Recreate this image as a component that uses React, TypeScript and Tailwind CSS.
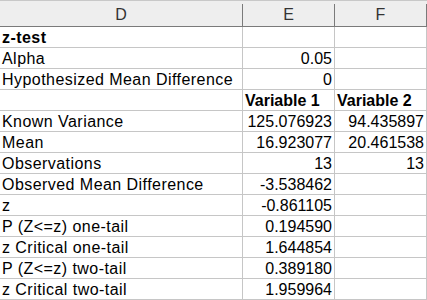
const rows: { label: string; e?: string; f?: string; bold?: boolean; head?: boolean }[] = [
  { label: 'z-test', bold: true },
  { label: 'Alpha', e: '0.05' },
  { label: 'Hypothesized Mean Difference', e: '0' },
  { label: '', e: 'Variable 1', f: 'Variable 2', head: true },
  { label: 'Known Variance', e: '125.076923', f: '94.435897' },
  { label: 'Mean', e: '16.923077', f: '20.461538' },
  { label: 'Observations', e: '13', f: '13' },
  { label: 'Observed Mean Difference', e: '-3.538462' },
  { label: 'z', e: '-0.861105' },
  { label: 'P (Z<=z) one-tail', e: '0.194590' },
  { label: 'z Critical one-tail', e: '1.644854' },
  { label: 'P (Z<=z) two-tail', e: '0.389180' },
  { label: 'z Critical two-tail', e: '1.959964' },
]

function HeaderCell({ name, width }: { name: string; width: string }) {
  return (
    <div className={`flex h-full ${width}`}>
      <div className="flex flex-1 items-center justify-center pt-[3px] text-[#333]">{name}</div>
      <div className="w-px self-end h-[22px] bg-[#7a7a7a]" />
    </div>
  )
}

export default function App() {
  return (
    <div className="w-[427px] h-[300px] overflow-hidden bg-white text-[16px] leading-[20px] text-black" style={{ fontFamily: '"Liberation Sans", Arial, sans-serif' }}>
      <div className="flex h-[27px] border-t border-[#c8c8c8] border-b border-b-[#7a7a7a] bg-[#eeeeee]">
        <HeaderCell name="D" width="w-[243px]" />
        <HeaderCell name="E" width="w-[92px]" />
        <HeaderCell name="F" width="w-[92px]" />
      </div>
      {rows.map((r, i) => (
        <div key={i} className="flex h-[21px] border-b border-[#c6c6c6]">
          <div className={`w-[243px] border-r border-[#c6c6c6] pl-[2px] pt-px tracking-[0.45px] whitespace-nowrap overflow-hidden ${r.bold ? 'font-bold' : ''}`}>{r.label}</div>
          <div className={`w-[92px] border-r border-[#c6c6c6] pt-px whitespace-nowrap ${r.head ? 'pl-[2px] font-bold' : 'text-right pr-[2px]'}`}>{r.e}</div>
          <div className={`w-[92px] border-r border-[#c6c6c6] pt-px whitespace-nowrap overflow-hidden ${r.head ? 'pl-[2px] font-bold' : 'text-right pr-[2px]'}`}>{r.f}</div>
        </div>
      ))}
    </div>
  )
}
